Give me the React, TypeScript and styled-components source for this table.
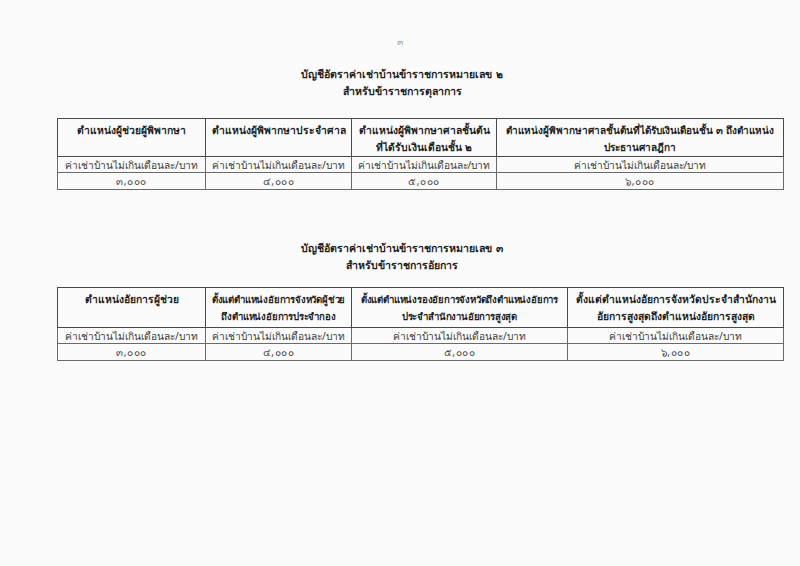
import styled, { createGlobalStyle } from 'styled-components';

// ----------------------------------------------------------------------

const GlobalStyle = createGlobalStyle`
  html, body {
    margin: 0;
    padding: 0;
    background: #fbfbfb;
  }

  body {
    font-family: "Noto Sans", "DejaVu Sans", sans-serif;
    color: #262626;
  }
`;

const Page = styled.div`
  display: flex;
  flex-direction: column;
  width: 800px;
  height: 566px;
  padding: 36px 0 0 57px;
  box-sizing: border-box;
  overflow: hidden;
`;

const PageNumber = styled.div`
  width: 686px;
  height: 12px;
  text-align: center;
  font-size: 9px;
  line-height: 12px;
  color: #9a9a9a;
`;

const Title = styled.div<{ gap: number }>`
  width: 690px;
  margin-top: ${({ gap }) => gap}px;
  text-align: center;
  font-size: 10.6px;
  line-height: 17px;
  font-weight: 700;
  color: #1e1e1e;
  word-spacing: 1.5px;

  p {
    margin: 0;
  }
`;

const Table = styled.table<{ gap: number }>`
  width: 726px;
  margin-top: ${({ gap }) => gap}px;
  border-collapse: collapse;
  table-layout: fixed;
  border: 1px solid #4a4a4a;
`;

const HeadCell = styled.th<{ height: number; size: number }>`
  height: ${({ height }) => height}px;
  padding: 3px 0 0;
  box-sizing: border-box;
  vertical-align: top;
  text-align: center;
  font-size: ${({ size }) => size}px;
  letter-spacing: ${({ size }) => (size < 10 ? -0.2 : 0)}px;
  line-height: 17px;
  font-weight: 700;
  color: #1f1f1f;
  border: 1px solid #4a4a4a;
  white-space: nowrap;
  overflow: hidden;
`;

const DataCell = styled.td<{ height: number }>`
  height: ${({ height }) => height}px;
  padding: 0 2px;
  box-sizing: border-box;
  text-align: center;
  vertical-align: middle;
  font-size: 10.2px;
  line-height: 14px;
  font-weight: 400;
  color: #3a3a3a;
  border: 1px solid #6a6a6a;
  white-space: nowrap;
  overflow: hidden;
`;

const Amount = styled(DataCell)`
  letter-spacing: 0.6px;
  color: #4a4a4a;
`;

// ----------------------------------------------------------------------

interface IColumn {
  width: number;
  label: string[];
  size?: number;
}

interface IRateTable {
  title: string[];
  columns: IColumn[];
  amounts: string[];
  titleGap: number;
  tableGap: number;
  headHeight: number;
  rowHeights: [number, number];
}

const RENT = 'ค่าเช่าบ้านไม่เกินเดือนละ/บาท';

const TABLES: IRateTable[] = [
  {
    title: ['บัญชีอัตราค่าเช่าบ้านข้าราชการหมายเลข ๒', 'สำหรับข้าราชการตุลาการ'],
    columns: [
      { width: 148, label: ['ตำแหน่งผู้ช่วยผู้พิพากษา'] },
      { width: 146, label: ['ตำแหน่งผู้พิพากษาประจำศาล'] },
      { width: 145, label: ['ตำแหน่งผู้พิพากษาศาลชั้นต้น', 'ที่ได้รับเงินเดือนชั้น ๒'] },
      {
        width: 287,
        label: ['ตำแหน่งผู้พิพากษาศาลชั้นต้นที่ได้รับเงินเดือนชั้น ๓ ถึงตำแหน่ง', 'ประธานศาลฎีกา'],
        size: 10,
      },
    ],
    amounts: ['๓,๐๐๐', '๔,๐๐๐', '๕,๐๐๐', '๖,๐๐๐'],
    titleGap: 18,
    tableGap: 18,
    headHeight: 37,
    rowHeights: [16, 17],
  },
  {
    title: ['บัญชีอัตราค่าเช่าบ้านข้าราชการหมายเลข ๓', 'สำหรับข้าราชการอัยการ'],
    columns: [
      { width: 148, label: ['ตำแหน่งอัยการผู้ช่วย'] },
      { width: 146, label: ['ตั้งแต่ตำแหน่งอัยการจังหวัดผู้ช่วย', 'ถึงตำแหน่งอัยการประจำกอง'], size: 9.6 },
      {
        width: 216,
        label: ['ตั้งแต่ตำแหน่งรองอัยการจังหวัดถึงตำแหน่งอัยการ', 'ประจำสำนักงานอัยการสูงสุด'],
        size: 9.6,
      },
      { width: 216, label: ['ตั้งแต่ตำแหน่งอัยการจังหวัดประจำสำนักงาน', 'อัยการสูงสุดถึงตำแหน่งอัยการสูงสุด'] },
    ],
    amounts: ['๓,๐๐๐', '๔,๐๐๐', '๕,๐๐๐', '๖,๐๐๐'],
    titleGap: 50,
    tableGap: 13,
    headHeight: 40,
    rowHeights: [16, 17],
  },
];

function RateTable({ title, columns, amounts, titleGap, tableGap, headHeight, rowHeights }: IRateTable) {
  return (
    <>
      <Title gap={titleGap}>
        {title.map((line) => (
          <p key={line}>{line}</p>
        ))}
      </Title>
      <Table gap={tableGap}>
        <colgroup>
          {columns.map((col) => (
            <col key={col.label[0]} style={{ width: col.width }} />
          ))}
        </colgroup>
        <thead>
          <tr>
            {columns.map((col) => (
              <HeadCell key={col.label[0]} height={headHeight} size={col.size ?? 10.3}>
                {col.label.map((line) => (
                  <div key={line}>{line}</div>
                ))}
              </HeadCell>
            ))}
          </tr>
        </thead>
        <tbody>
          <tr>
            {columns.map((col) => (
              <DataCell key={col.label[0]} height={rowHeights[0]}>
                {RENT}
              </DataCell>
            ))}
          </tr>
          <tr>
            {amounts.map((amount) => (
              <Amount key={amount} height={rowHeights[1]}>
                {amount}
              </Amount>
            ))}
          </tr>
        </tbody>
      </Table>
    </>
  );
}

export default function App() {
  return (
    <>
      <GlobalStyle />
      <Page>
        <PageNumber>๓</PageNumber>
        {TABLES.map((table) => (
          <RateTable key={table.title[0]} {...table} />
        ))}
      </Page>
    </>
  );
}
